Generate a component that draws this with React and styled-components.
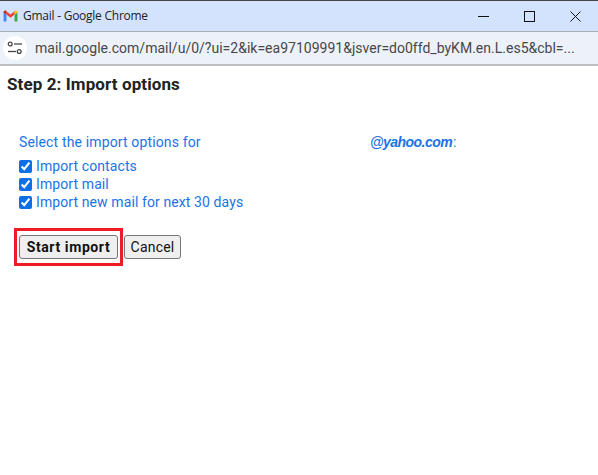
import React from "react";
import styled, { createGlobalStyle } from "styled-components";

const Global = createGlobalStyle`
  html, body { margin: 0; padding: 0; background: #fff; width: 598px; height: 475px; overflow: hidden; }
  * { box-sizing: border-box; }
`;
const Page = styled.div`
  width: 598px; height: 475px; display: flex; flex-direction: column;
  font-family: Roboto, "Liberation Sans", sans-serif;
`;
const TitleBar = styled.header`
  height: 31px; flex: none; background: #d3e3fd; border-top: 1px solid #454545;
  display: flex; align-items: center; padding-left: 3px; color: #1f1f1f;
`;
const TitleText = styled.span`
  font: 12px "Open Sans", "Noto Sans", sans-serif; margin-left: 5px; padding-bottom: 2px; flex: 1; color: #222; letter-spacing: -0.25px;
`;
const WinButton = styled.button`
  width: 46px; height: 30px; border: 0; padding: 0; background: none; display: flex;
  align-items: center; justify-content: center;
`;
const AddressBar = styled.div`
  height: 35px; flex: none; background: #edf2fa; border-top: 1px solid #a9abb0; border-bottom: 2px solid #bcbec2;
  display: flex; align-items: center; padding-left: 3px;
`;
const SiteIcon = styled.div`
  width: 24px; height: 24px; border-radius: 50%; background: #fff; display: flex;
  align-items: center; justify-content: center; flex: none;
`;
const Url = styled.span`
  font: 14px Roboto, "Liberation Sans", sans-serif; margin-left: 8px; color: #474747; white-space: nowrap;
  letter-spacing: 0.01px;
`;
const Content = styled.main`
  flex: 1; padding: 7px 7px 0; background: #fff;
`;
const Heading = styled.h1`
  margin: 0; font: 700 17px/22px Roboto, "Liberation Sans", sans-serif; color: #222; letter-spacing: 0.1px;
`;
const Options = styled.section`
  margin: 38px 0 0 12px; color: #1a73e8; font-size: 14px; letter-spacing: 0.14px;
`;
const IntroRow = styled.div`
  display: flex; line-height: 18px; height: 18px; margin-bottom: 6px;
`;
const Intro = styled.span`
  width: 351px;
`;
const Address = styled.span`
  font: italic 700 14px "Liberation Sans", sans-serif; line-height: 18px; letter-spacing: -0.55px;
`;
const Colon = styled.span`
  font: 400 14px Roboto, sans-serif; letter-spacing: 0; margin-left: 1px;
`;
const Option = styled.label`
  display: flex; align-items: center; height: 18px; line-height: 18px; gap: 3px; letter-spacing: 0.1px;
`;
const Check = styled.input`
  width: 13px; height: 13px; margin: 0 1px 0 0; accent-color: #0b6fe8;
`;
const Actions = styled.div`
  display: flex; align-items: center; margin: 17px 0 0 -5px; gap: 1px;
`;
const Highlight = styled.div`
  border: 3px solid #ed1c24; padding: 5px 2px; display: flex; height: 38px; align-items: center;
`;
const Button = styled.button`
  height: 24px; padding: 0; background: #efefef; border: 1px solid #767676; border-radius: 3px;
  color: #111; font: ${p => (p.$primary ? 700 : 400)} 14px Roboto, "Liberation Sans", sans-serif;
  letter-spacing: ${p => (p.$primary ? "0.6px" : "0.2px")};
  width: ${p => p.$w}px;
`;

const GmailIcon = () => (
  <svg width="15" height="12" viewBox="0 0 16 13">
    <path d="M.5 12.5V3L3.6 5v7.5z" fill="#4285f4" />
    <path d="M12.4 12.5V5l3.1-2v9.5z" fill="#34a853" />
    <path d="M3.6 5V1.4L8 4.8l4.4-3.4V5L8 8.4z" fill="#ea4335" />
    <path d="M.5 2.6C.5 .9 2.4 0 3.6 1.1V5L.5 3z" fill="#c5221f" />
    <path d="M12.4 1.1C13.6 0 15.5.9 15.5 2.6V3l-3.1 2z" fill="#fbbc04" />
  </svg>
);
const TuneIcon = () => (
  <svg width="16" height="14" viewBox="0 0 16 14" fill="none" stroke="#474747" strokeWidth="1.3">
    <circle cx="3.2" cy="3" r="1.9" />
    <path d="M7 3h8" />
    <circle cx="12.2" cy="10.5" r="1.9" />
    <path d="M1 10.5h8" />
  </svg>
);

export default function App() {
  return (
    <Page>
      <Global />
      <TitleBar>
        <GmailIcon />
        <TitleText>Gmail - Google Chrome</TitleText>
        <WinButton aria-label="Minimize">
          <svg width="11" height="11" viewBox="0 0 11 11"><path d="M0 5.5h11" stroke="#111" /></svg>
        </WinButton>
        <WinButton aria-label="Maximize">
          <svg width="11" height="11" viewBox="0 0 11 11"><rect x=".5" y=".5" width="10" height="10" fill="none" stroke="#111" /></svg>
        </WinButton>
        <WinButton aria-label="Close">
          <svg width="11" height="11" viewBox="0 0 11 11"><path d="M.5.5l10 10M10.5.5l-10 10" stroke="#111" /></svg>
        </WinButton>
      </TitleBar>
      <AddressBar>
        <SiteIcon><TuneIcon /></SiteIcon>
        <Url>mail.google.com/mail/u/0/?ui=2&amp;ik=ea97109991&amp;jsver=do0ffd_byKM.en.L.es5&amp;cbl=...</Url>
      </AddressBar>
      <Content>
        <Heading>Step 2: Import options</Heading>
        <Options>
          <IntroRow>
            <Intro>Select the import options for</Intro>
            <Address>@yahoo.com<Colon>:</Colon></Address>
          </IntroRow>
          <Option><Check type="checkbox" defaultChecked />Import contacts</Option>
          <Option><Check type="checkbox" defaultChecked />Import mail</Option>
          <Option><Check type="checkbox" defaultChecked />Import new mail for next 30 days</Option>
          <Actions>
            <Highlight><Button $primary $w={99}>Start import</Button></Highlight>
            <Button $w={57}>Cancel</Button>
          </Actions>
        </Options>
      </Content>
    </Page>
  );
}
